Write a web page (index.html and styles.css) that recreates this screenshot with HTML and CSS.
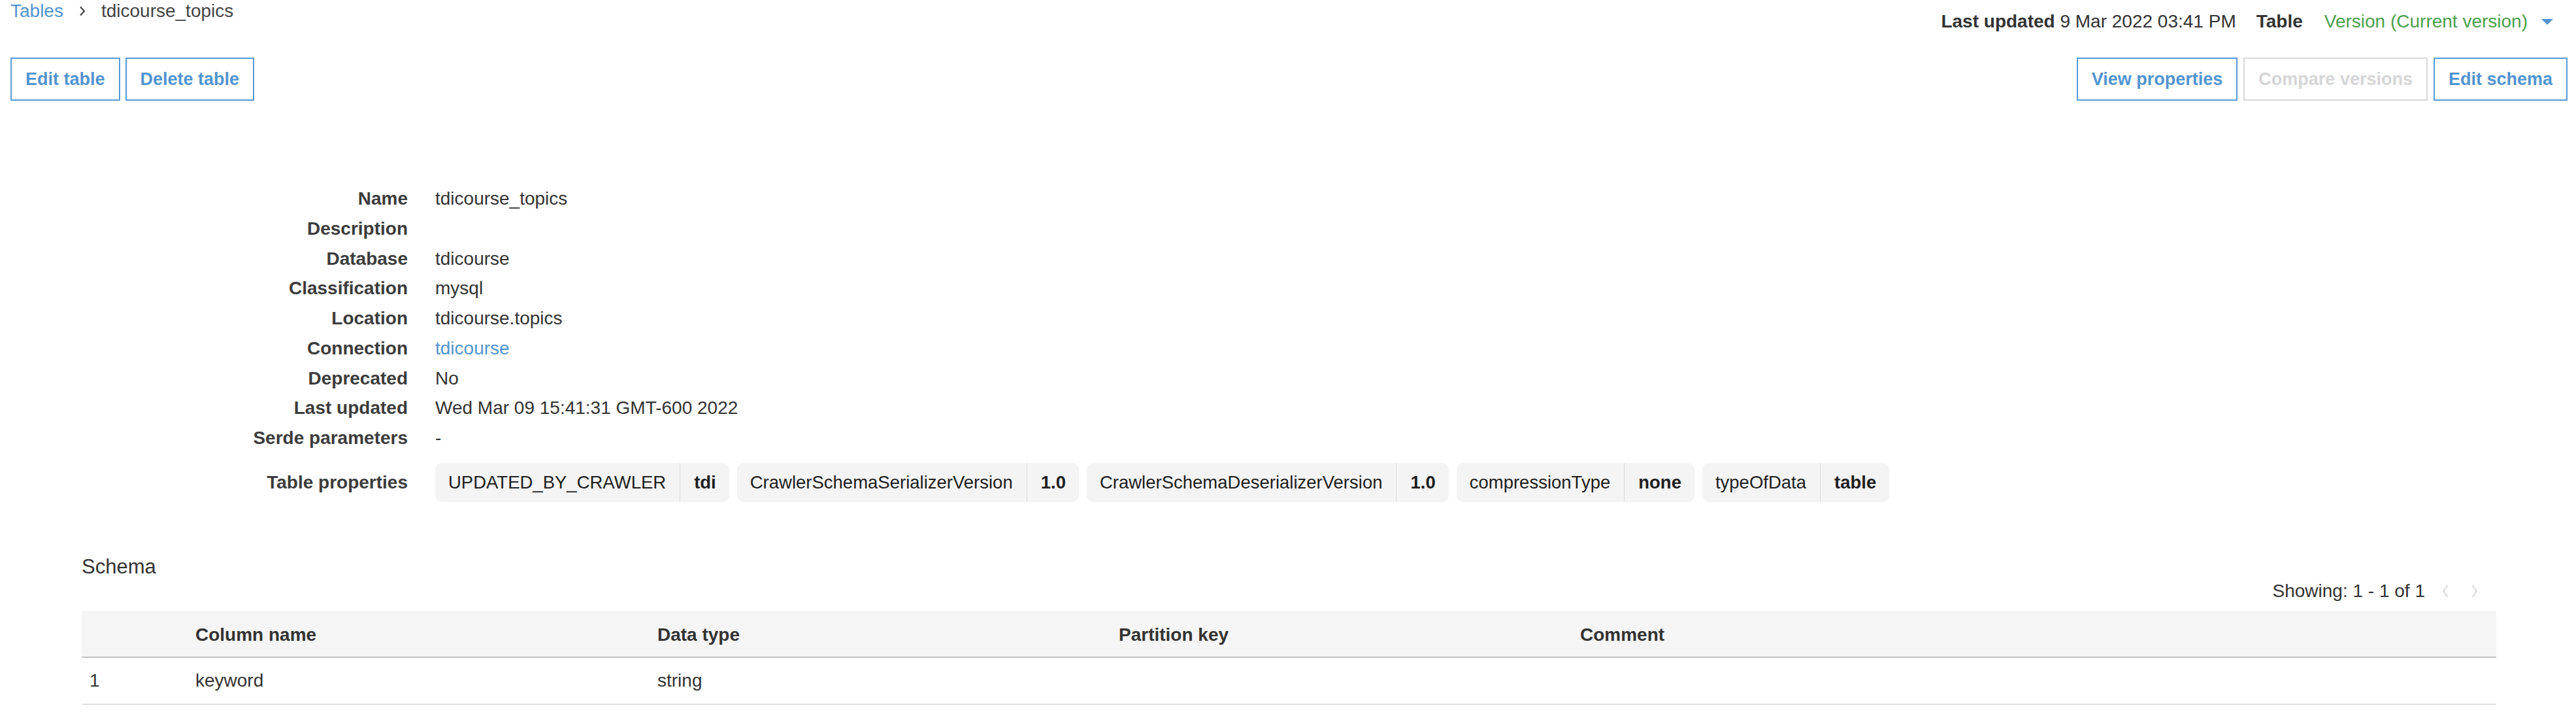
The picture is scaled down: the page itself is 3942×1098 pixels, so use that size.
FILE: index.html
```html
<!DOCTYPE html>
<html lang="en">
<head>
<meta charset="utf-8">
<title>tdicourse_topics</title>
<link rel="stylesheet" href="styles.css">
</head>
<body>
<div class="page">
  <header class="page-header">
    <div class="topline">
      <nav class="breadcrumb">
        <a class="crumb-link" href="#">Tables</a>
        <svg class="crumb-sep" width="10" height="16" viewBox="0 0 10 16"><polyline points="2,1.5 8,8 2,14.5" fill="none" stroke="#444" stroke-width="2.2"/></svg>
        <span class="crumb-current">tdicourse_topics</span>
      </nav>
      <div class="meta">
        <span><b>Last updated</b> 9 Mar 2022 03:41 PM</span>
        <b class="meta-table">Table</b>
        <span class="version">Version (Current version)</span>
        <svg class="caret" width="18" height="9" viewBox="0 0 18 9"><polygon points="0,0 18,0 9,9" fill="#5294d0"/></svg>
      </div>
    </div>
    <div class="actions">
      <div class="btn-group">
        <button class="btn">Edit table</button>
        <button class="btn">Delete table</button>
      </div>
      <div class="btn-group right">
        <button class="btn">View properties</button>
        <button class="btn" disabled>Compare versions</button>
        <button class="btn">Edit schema</button>
      </div>
    </div>
  </header>

  <section class="details">
    <dl class="props">
      <dt>Name</dt><dd>tdicourse_topics</dd>
      <dt>Description</dt><dd></dd>
      <dt>Database</dt><dd>tdicourse</dd>
      <dt>Classification</dt><dd>mysql</dd>
      <dt>Location</dt><dd>tdicourse.topics</dd>
      <dt>Connection</dt><dd><a class="link" href="#">tdicourse</a></dd>
      <dt>Deprecated</dt><dd>No</dd>
      <dt>Last updated</dt><dd>Wed Mar 09 15:41:31 GMT-600 2022</dd>
      <dt>Serde parameters</dt><dd>-</dd>
      <dt class="tp">Table properties</dt>
      <dd class="tp">
        <div class="chips">
          <div class="chip"><span class="chip-key">UPDATED_BY_CRAWLER</span><span class="chip-val">tdi</span></div>
          <div class="chip"><span class="chip-key">CrawlerSchemaSerializerVersion</span><span class="chip-val">1.0</span></div>
          <div class="chip"><span class="chip-key">CrawlerSchemaDeserializerVersion</span><span class="chip-val">1.0</span></div>
          <div class="chip"><span class="chip-key">compressionType</span><span class="chip-val">none</span></div>
          <div class="chip"><span class="chip-key">typeOfData</span><span class="chip-val">table</span></div>
        </div>
      </dd>
    </dl>
  </section>

  <section class="schema">
    <h2 class="schema-title">Schema</h2>
    <div class="pager">
      <span class="pager-text">Showing: 1 - 1 of 1</span>
      <svg class="pager-prev" width="10" height="20" viewBox="0 0 10 20"><polyline points="8.5,1 2,10 8.5,19" fill="none" stroke="#cfcfcf" stroke-width="1.5"/></svg>
      <svg class="pager-next" width="10" height="20" viewBox="0 0 10 20"><polyline points="1.5,1 8,10 1.5,19" fill="none" stroke="#cfcfcf" stroke-width="1.5"/></svg>
    </div>
    <div class="table">
      <div class="thead">
        <div></div>
        <div>Column name</div>
        <div>Data type</div>
        <div>Partition key</div>
        <div>Comment</div>
      </div>
      <div class="trow">
        <div>1</div>
        <div>keyword</div>
        <div>string</div>
        <div></div>
        <div></div>
      </div>
    </div>
  </section>
</div>
</body>
</html>
```

FILE: styles.css
```css
* { box-sizing: border-box; }

html, body {
  margin: 0;
  padding: 0;
  background: #ffffff;
}

body {
  font-family: "Liberation Sans", Arial, Helvetica, sans-serif;
  font-size: 28px;
  line-height: 32px;
  color: #333333;
}

/* ---------- header ---------- */
.topline {
  display: flex;
  justify-content: space-between;
  align-items: flex-start;
}

.breadcrumb {
  display: flex;
  align-items: center;
  padding: 1px 0 0 16px;
}

.crumb-link {
  color: #5294d0;
  text-decoration: none;
}

.crumb-sep {
  margin: 0 24px;
  display: block;
}

.crumb-current {
  color: #444444;
}

.meta {
  display: flex;
  align-items: center;
  margin-top: 17px;
  padding-right: 35px;
  color: #333333;
}

.meta b { font-weight: bold; }

.meta-table { margin-left: 31px; }

.version {
  color: #4c9f4c;
  margin-left: 33px;
}

.caret {
  margin-left: 21px;
  display: block;
}

.actions {
  display: flex;
  justify-content: space-between;
  margin-top: 39px;
  padding: 0 13px 0 16px;
}

.btn-group {
  display: flex;
  gap: 8px;
}

.btn-group.right { gap: 9px; }

.btn {
  font-family: "Liberation Sans", Arial, Helvetica, sans-serif;
  font-weight: bold;
  font-size: 27px;
  line-height: 32px;
  color: #5294d0;
  background: #ffffff;
  border: 2px solid #5a9ad4;
  border-radius: 0;
  padding: 15px 21px;
  margin: 0;
}

.btn:disabled {
  color: #d6d6d6;
  border-color: #d9d9d9;
}

/* ---------- details ---------- */
.details {
  margin: 127px 0 0 125px;
}

.props {
  display: grid;
  grid-template-columns: 499px 1fr;
  column-gap: 42px;
  margin: 0;
  line-height: 45.75px;
}

.props dt {
  font-weight: bold;
  text-align: right;
  color: #3c3c3c;
}

.props dd {
  margin: 0;
  color: #333333;
}

.link {
  color: #5294d0;
  text-decoration: none;
}

.props .tp {
  margin-top: 15.5px;
  height: 60px;
  display: flex;
  align-items: center;
  line-height: 32px;
}

.props dt.tp { justify-content: flex-end; }

.chips {
  display: flex;
  gap: 12px;
}

.chip {
  display: flex;
  height: 60px;
  line-height: 60px;
  font-size: 27.5px;
  background: #f4f4f4;
  border-radius: 10px;
  color: #1e1e1e;
}

.chip-key { padding: 0 21px 0 20px; }

.chip-val {
  padding: 0 20px 0 21px;
  border-left: 1px solid #dcdcdc;
  font-weight: bold;
}

/* ---------- schema ---------- */
.schema {
  margin: 82px 122px 0 125px;
}

.schema-title {
  margin: 0;
  font-size: 31px;
  line-height: 34px;
  font-weight: normal;
  color: #333333;
}

.pager {
  display: flex;
  justify-content: flex-end;
  align-items: center;
  margin-top: 4px;
  padding-right: 28px;
  color: #333333;
}

.pager-prev { margin-left: 26px; display: block; }
.pager-next { margin-left: 35px; display: block; }

.table { margin-top: 13.75px; }

.thead,
.trow {
  display: grid;
  grid-template-columns: 162px 707px 706px 706px 1fr;
}

.thead {
  background: #f5f5f5;
  border-bottom: 2px solid #c2c2c2;
  font-weight: bold;
  color: #333333;
}

.thead > div { padding: 21px 12px 17px; }

.trow {
  border-bottom: 2px solid #e1e1e1;
  color: #333333;
}

.trow > div { padding: 19px 12px; min-height: 70px; }
```
